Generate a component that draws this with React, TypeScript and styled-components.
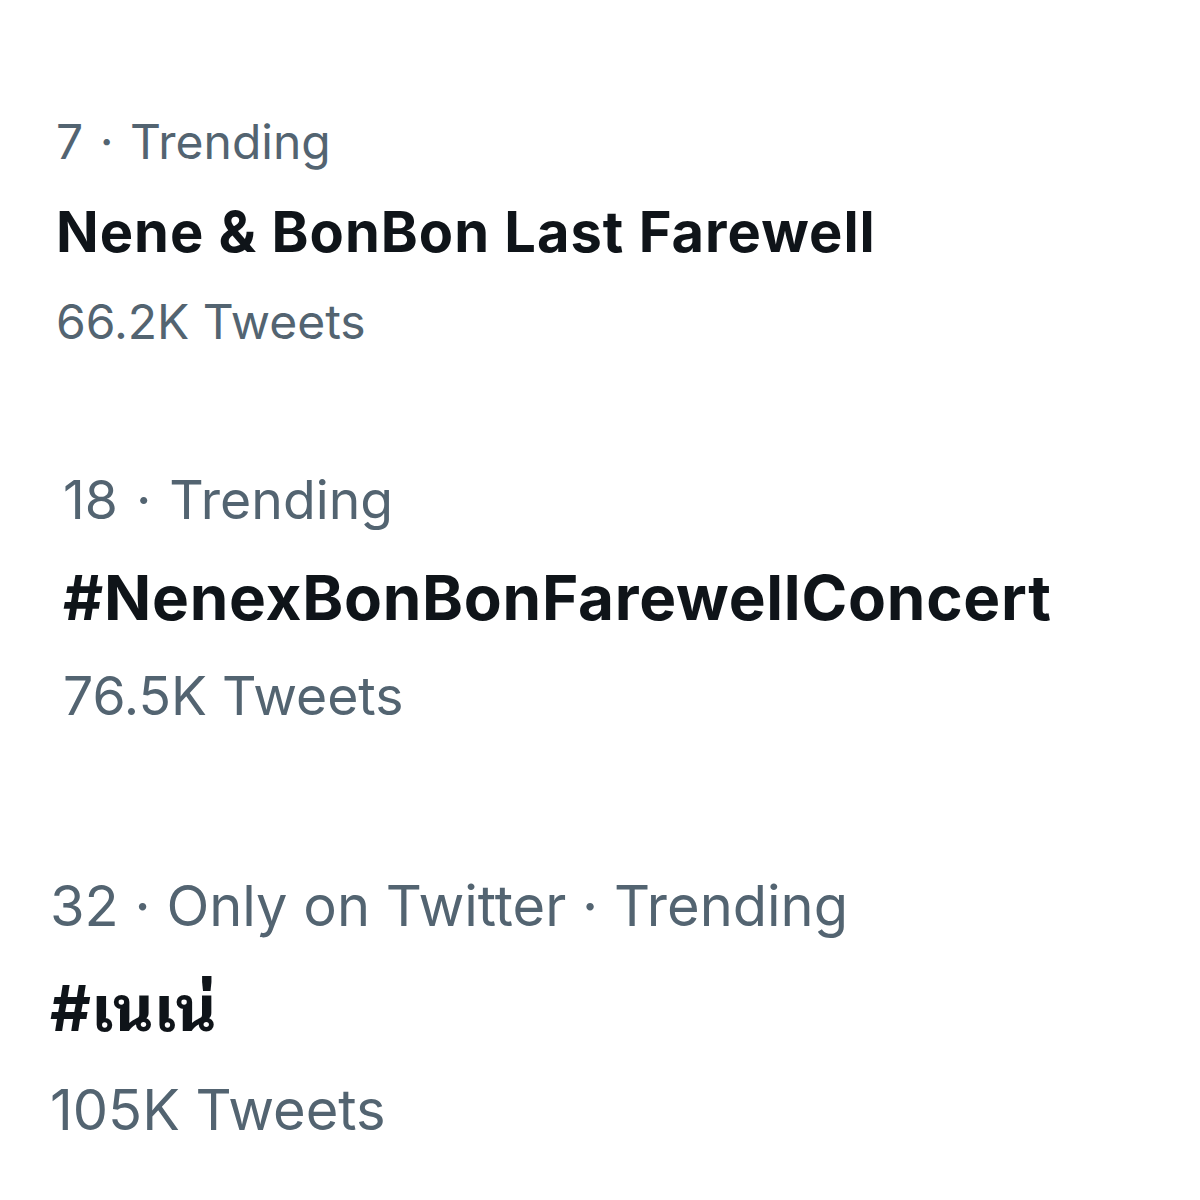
import { createGlobalStyle, styled } from "styled-components";

const GlobalStyle = createGlobalStyle`
  html, body {
    margin: 0;
    padding: 0;
    background: #ffffff;
  }
  body {
    font-family: Inter, "Noto Sans", "Noto Sans Thai Looped", "Noto Sans Thai", sans-serif;
  }
`;

type Trend = {
  rank: string;
  context: string[];
  title: string;
  count: string;
  size: number;
  titleSize: number;
  tracking: number;
  wordGap: number;
  lineHeight: number;
  indent: number;
  gap: number;
};

const trends: Trend[] = [
  {
    rank: "7",
    context: ["Trending"],
    title: "Nene & BonBon Last Farewell",
    count: "66.2K Tweets",
    size: 48,
    titleSize: 56,
    tracking: 0.018,
    wordGap: 3,
    lineHeight: 90,
    indent: 56,
    gap: 0,
  },
  {
    rank: "18",
    context: ["Trending"],
    title: "#NenexBonBonFarewellConcert",
    count: "76.5K Tweets",
    size: 53.5,
    titleSize: 62,
    tracking: 0.012,
    wordGap: 3,
    lineHeight: 98,
    indent: 63,
    gap: 84,
  },
  {
    rank: "32",
    context: ["Only on Twitter", "Trending"],
    title: "#เนเน่",
    count: "105K Tweets",
    size: 56,
    titleSize: 63,
    tracking: 0,
    wordGap: 0,
    lineHeight: 102,
    indent: 50,
    gap: 110,
  },
];

function TrendItem({ trend }: { trend: Trend }) {
  return (
    <Item $indent={trend.indent} $gap={trend.gap} $lh={trend.lineHeight}>
      <Meta $size={trend.size} $wordGap={trend.wordGap}>
        {[trend.rank, ...trend.context].join(" · ")}
      </Meta>
      <Title $size={trend.titleSize} $tracking={trend.tracking}>
        {trend.title}
      </Title>
      <Count $size={trend.size}>{trend.count}</Count>
    </Item>
  );
}

export default function App() {
  return (
    <>
      <GlobalStyle />
      <Page>
        {trends.map((t) => (
          <TrendItem key={t.rank} trend={t} />
        ))}
      </Page>
    </>
  );
}

const Page = styled.div`
  width: 1200px;
  height: 1200px;
  box-sizing: border-box;
  padding-top: 97px;
  display: flex;
  flex-direction: column;
  overflow: hidden;
`;

const Item = styled.div<{ $indent: number; $gap: number; $lh: number }>`
  display: flex;
  flex-direction: column;
  padding-left: ${(p) => p.$indent}px;
  margin-top: ${(p) => p.$gap}px;
  line-height: ${(p) => p.$lh}px;
  white-space: nowrap;
`;

const Meta = styled.div<{ $size: number; $wordGap: number }>`
  font-size: ${(p) => p.$size}px;
  color: #536471;
  font-weight: 400;
  word-spacing: ${(p) => p.$wordGap}px;
`;

const Title = styled.div<{ $size: number; $tracking: number }>`
  font-size: ${(p) => p.$size}px;
  color: #0f1419;
  font-weight: 700;
  letter-spacing: ${(p) => p.$tracking}em;
`;

const Count = styled.div<{ $size: number }>`
  font-size: ${(p) => p.$size}px;
  color: #536471;
  font-weight: 400;
`;
